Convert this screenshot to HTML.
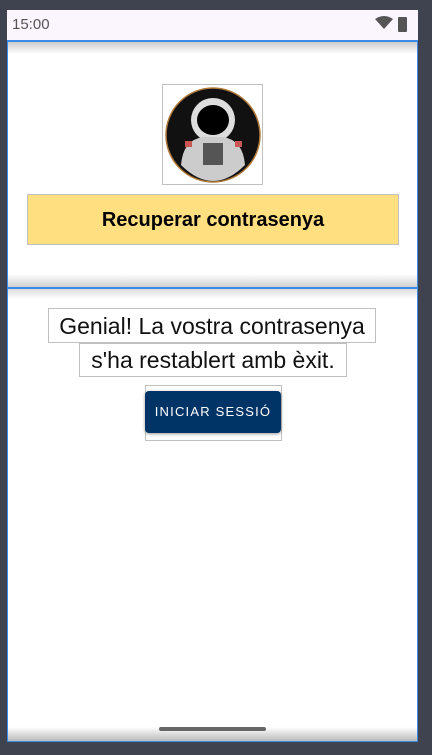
<!DOCTYPE html>
<html><head><style>
body{margin:0;width:432px;height:755px;background:#3f424f;position:relative;overflow:hidden;font-family:"Liberation Sans",Roboto,sans-serif}
.scr{position:absolute;left:7px;top:10px;width:411px;height:732px;background:#fff}
.sb{position:absolute;left:0;top:0;width:411px;height:30px;background:#fbf5fd;color:#555;font-size:15px}
.sec1{position:absolute;left:0;top:30px;width:411px;height:248px;border:1px solid #3a8aea;border-top:2px solid #3a8aea;border-bottom:none;box-sizing:border-box;background:linear-gradient(#ccc,#fff 12px,#fff 232px,#ccc)}
.sec2{position:absolute;left:0;top:277px;width:411px;height:455px;border:1px solid #3a8aea;border-top:2px solid #3a8aea;box-sizing:border-box;background:linear-gradient(#ddd,#fff 10px,#fff 438px,#bbb)}
.box{position:absolute;border:1px solid #c0c0c0;box-sizing:border-box}
</style></head><body>
<div class="scr">
<div class="sb"><span style="position:absolute;left:5px;top:6px">15:00</span>
<svg style="position:absolute;left:368px;top:5px" width="36" height="18"><path d="M0 4 Q9 -2 18 4 L9 14Z" fill="#555"/><rect x="23" y="2" width="9" height="15" rx="1" fill="#555"/></svg></div>
<div class="sec1"></div>
<div class="sec2"></div>
<div class="box" style="left:155px;top:74px;width:101px;height:101px">
<svg width="99" height="99" viewBox="0 0 99 99"><circle cx="50" cy="50" r="47" fill="#111" stroke="#b07a3a" stroke-width="1.5"/><ellipse cx="50" cy="35" rx="22" ry="22" fill="#ddd"/><ellipse cx="50" cy="35" rx="16" ry="15" fill="#000"/><path d="M18 80 Q20 55 40 52 L60 52 Q80 55 82 80 Q66 96 50 96 Q34 96 18 80Z" fill="#ccc"/><rect x="40" y="58" width="20" height="22" fill="#555"/><rect x="22" y="56" width="7" height="6" fill="#c55"/><rect x="72" y="56" width="7" height="6" fill="#c55"/></svg></div>
<div class="box" style="left:20px;top:184px;width:372px;height:51px;background:#ffdf80;text-align:center;line-height:51px;font-weight:bold;font-size:20px;color:#000">Recuperar contrasenya</div>
<div class="box" style="left:41px;top:298px;width:328px;height:35px;font-size:23px;text-align:center;line-height:35px;color:#111">Genial! La vostra contrasenya</div>
<div class="box" style="left:72px;top:333px;width:268px;height:34px;font-size:23px;text-align:center;line-height:33px;color:#111">s'ha restablert amb èxit.</div>
<div class="box" style="left:138px;top:375px;width:137px;height:56px"></div>
<div style="position:absolute;left:138px;top:381px;width:136px;height:42px;background:#003366;border-radius:4px;box-shadow:0 1px 3px rgba(0,0,0,.4);color:#fff;font-size:13px;letter-spacing:1.2px;text-align:center;line-height:42px">INICIAR SESSIÓ</div>
<div style="position:absolute;left:152px;top:717px;width:107px;height:4px;border-radius:2px;background:#666"></div>
</div>
</body></html>
